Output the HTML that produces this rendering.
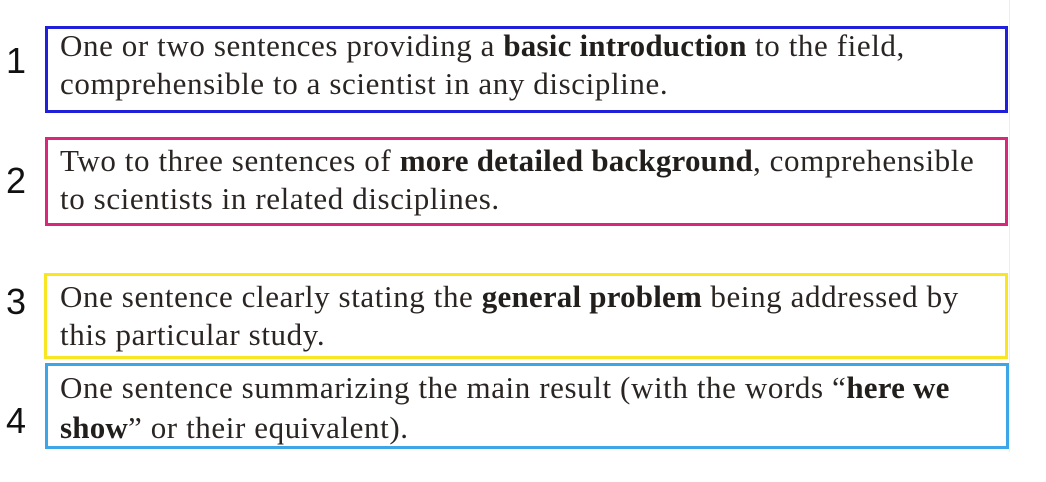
<!DOCTYPE html>
<html><head><style>
body{margin:0;width:1046px;height:482px;background:#fff;position:relative;overflow:hidden;font-family:"Liberation Serif",serif;color:#2a2523}
.b{position:absolute;box-sizing:border-box;border:3.5px solid}
.t{position:absolute;left:60px;font-size:31px;line-height:38px;white-space:nowrap;letter-spacing:0.6px}
.n{position:absolute;left:6px;font-family:"Liberation Sans",sans-serif;font-size:36px;color:#111}
b{color:#221e1c;letter-spacing:0.2px}
</style></head><body>
<div style="position:absolute;left:1009px;top:0;width:1px;height:452px;background:#eee"></div>
<div class="b" style="left:45px;top:26px;width:963px;height:87px;border-color:#1f1fdc"></div>
<div class="t" style="top:27px">One or two sentences providing a <b>basic introduction</b> to the field,<br>comprehensible to a scientist in any discipline.</div>
<div class="n" style="top:40px">1</div>

<div class="b" style="left:45px;top:137px;width:963px;height:89px;border-color:#d8287a"></div>
<div class="t" style="top:142px">Two to three sentences of <b>more detailed background</b>, comprehensible<br>to scientists in related disciplines.</div>
<div class="n" style="top:160px">2</div>

<div class="b" style="left:44px;top:273px;width:964px;height:86px;border-color:#f9e622"></div>
<div class="t" style="top:278px">One sentence clearly stating the <b>general problem</b> being addressed by<br>this particular study.</div>
<div class="n" style="top:281px">3</div>

<div class="b" style="left:45px;top:363px;width:964px;height:86px;border-color:#3ea6e6"></div>
<div class="t" style="top:368px;line-height:40px">One sentence summarizing the main result (with the words “<b>here we</b><br><b>show</b>” or their equivalent).</div>
<div class="n" style="top:400px">4</div>
</body></html>
